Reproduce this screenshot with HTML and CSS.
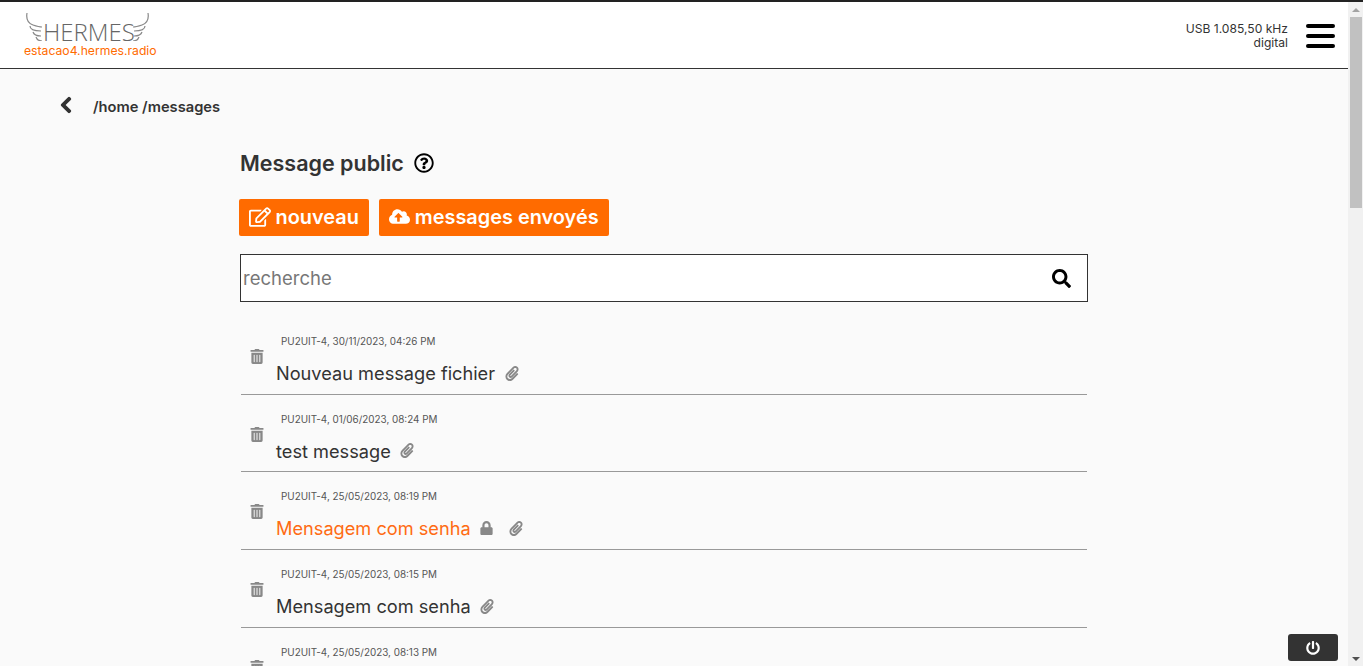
FILE: index.html
```html
<!DOCTYPE html>
<html lang="fr">
<head>
    <meta charset="UTF-8">
    <meta name="viewport" content="width=device-width, initial-scale=1.0">
    <title>Hermes - Messages</title>
    <link rel="stylesheet" href="styles.css">
</head>
<body>
    <svg class="icon-defs" aria-hidden="true">
        <symbol id="i-back" viewBox="0 0 320 512"><path d="M34.52 239.03L228.87 44.69c9.37-9.37 24.57-9.37 33.94 0l22.67 22.67c9.36 9.36 9.37 24.52.04 33.9L131.49 256l154.02 154.75c9.34 9.38 9.32 24.54-.04 33.9l-22.67 22.67c-9.37 9.37-24.57 9.37-33.94 0L34.52 272.97c-9.37-9.37-9.37-24.57 0-33.94z"/></symbol>
        <symbol id="i-search" viewBox="0 0 512 512"><path d="M505 442.7L405.3 343c-4.5-4.5-10.6-7-17-7H372c27.6-35.3 44-79.7 44-128C416 93.1 322.9 0 208 0S0 93.1 0 208s93.1 208 208 208c48.3 0 92.7-16.4 128-44v16.3c0 6.4 2.5 12.5 7 17l99.7 99.7c9.4 9.4 24.6 9.4 33.9 0l28.3-28.3c9.4-9.4 9.4-24.6.1-34zM208 336c-70.7 0-128-57.2-128-128 0-70.7 57.2-128 128-128 70.7 0 128 57.2 128 128 0 70.7-57.2 128-128 128z"/></symbol>
        <symbol id="i-lock" viewBox="0 0 448 512"><path d="M400 224h-24v-72C376 68.2 307.8 0 224 0S72 68.2 72 152v72H48c-26.5 0-48 21.5-48 48v192c0 26.5 21.5 48 48 48h352c26.5 0 48-21.5 48-48V272c0-26.5-21.5-48-48-48zm-104 0H152v-72c0-39.7 32.3-72 72-72s72 32.3 72 72v72z"/></symbol>
        <symbol id="i-trash" viewBox="0 0 448 512"><path d="M32 464a48 48 0 0 0 48 48h288a48 48 0 0 0 48-48V128H32zm272-256a16 16 0 0 1 32 0v224a16 16 0 0 1-32 0zm-96 0a16 16 0 0 1 32 0v224a16 16 0 0 1-32 0zm-96 0a16 16 0 0 1 32 0v224a16 16 0 0 1-32 0zM432 32H312l-9.4-18.7A24 24 0 0 0 281.1 0H166.8a23.72 23.72 0 0 0-21.4 13.3L136 32H16A16 16 0 0 0 0 48v32a16 16 0 0 0 16 16h416a16 16 0 0 0 16-16V48a16 16 0 0 0-16-16z"/></symbol>
        <symbol id="i-clip" viewBox="0 0 448 512"><path d="M43.246 466.142c-58.43-60.289-57.341-157.511 1.386-217.581L254.392 34c44.316-45.332 116.351-45.336 160.671 0 43.89 44.894 43.943 117.329 0 162.276L232.214 383.128c-29.855 30.537-78.633 30.111-107.982-.998-28.275-29.97-27.368-77.473 1.452-106.953l143.743-146.835c6.182-6.314 16.312-6.422 22.626-.241l22.861 22.379c6.315 6.182 6.422 16.312.241 22.626L171.427 319.927c-4.932 5.045-5.236 13.428-.648 18.292 4.372 4.634 11.245 4.711 15.688.165l182.849-186.851c19.613-20.062 19.613-52.725-.011-72.798-19.189-19.627-49.957-19.637-69.154 0L90.39 293.295c-34.763 35.56-35.299 93.12-1.191 128.313 34.01 35.093 88.985 35.137 123.058.286l172.06-175.999c6.177-6.319 16.307-6.433 22.626-.256l22.877 22.364c6.319 6.177 6.434 16.307.256 22.626l-172.06 175.998c-59.576 60.938-155.943 60.216-214.77-.485z"/></symbol>
        <symbol id="i-cloud" viewBox="0 0 640 512"><path d="M537.6 226.6c4.1-10.7 6.4-22.4 6.4-34.6 0-53-43-96-96-96-19.7 0-38.1 6-53.3 16.2C367 64.2 315.3 32 256 32c-88.4 0-160 71.6-160 160 0 2.7.1 5.4.2 8.1C40.2 219.8 0 273.2 0 336c0 79.5 64.5 144 144 144h368c70.7 0 128-57.3 128-128 0-61.9-44-113.6-102.4-125.4zM393.4 288H328v112c0 8.8-7.2 16-16 16h-48c-8.8 0-16-7.2-16-16V288h-65.4c-14.3 0-21.4-17.2-11.3-27.3l105.4-105.4c6.2-6.2 16.4-6.2 22.6 0l105.4 105.4c10.1 10.1 2.9 27.3-11.3 27.3z"/></symbol>
        <symbol id="i-edit" viewBox="0 0 576 512"><path d="M402.3 344.9l32-32c5-5 13.7-1.5 13.7 5.7V464c0 26.5-21.5 48-48 48H48c-26.5 0-48-21.5-48-48V112c0-26.5 21.5-48 48-48h273.5c7.1 0 10.7 8.6 5.7 13.7l-32 32c-1.5 1.5-3.5 2.3-5.7 2.3H48v352h352V350.5c0-2.1.8-4.1 2.3-5.6zm156.6-201.8L296.3 405.7l-90.4 10c-26.2 2.9-48.5-19.2-45.6-45.6l10-90.4L432.9 17.1c22.9-22.9 59.9-22.9 82.7 0l43.2 43.2c22.9 22.9 22.9 60 .1 82.8zM460.1 174L402 115.9 216.2 301.8l-7.3 65.3 65.3-7.3L460.1 174zm64.8-79.7l-43.2-43.2c-4.1-4.1-10.8-4.1-14.8 0L436 82l58.1 58.1 30.9-30.9c4-4.2 4-10.8-.1-14.9z"/></symbol>
        <symbol id="i-help" viewBox="0 0 512 512"><path d="M256 8C119.043 8 8 119.083 8 256c0 136.997 111.043 248 248 248s248-111.003 248-248C504 119.083 392.957 8 256 8zm0 448c-110.532 0-200-89.431-200-200 0-110.495 89.472-200 200-200 110.491 0 200 89.471 200 200 0 110.53-89.431 200-200 200zm107.244-255.2c0 67.052-72.421 68.084-72.421 92.863V300c0 6.627-5.373 12-12 12h-45.647c-6.627 0-12-5.373-12-12v-8.659c0-35.745 27.1-50.034 47.579-61.516 17.561-9.845 28.324-16.541 28.324-29.579 0-17.246-21.999-28.693-39.784-28.693-23.189 0-33.894 10.977-48.942 29.969-4.057 5.12-11.46 6.071-16.666 2.124l-27.824-21.098c-5.107-3.872-6.251-11.066-2.644-16.363C184.846 131.491 214.94 112 261.794 112c49.071 0 101.45 38.304 101.45 88.8zM298 368c0 23.159-18.841 42-42 42s-42-18.841-42-42 18.841-42 42-42 42 18.841 42 42z"/></symbol>
        <symbol id="i-power" viewBox="0 0 512 512"><path d="M400 54.1c63 45 104 118.6 104 201.9 0 136.8-110.8 247.7-247.5 248C120 504.3 8.2 393 8 256.4 7.9 173.1 48.9 99.3 111.8 54.2c11.7-8.3 28-4.8 35 7.7L162.6 90c5.9 10.5 3.1 23.8-6.6 31-41.5 30.8-68 79.6-68 134.9-.1 92.3 74.5 168.1 168 168.1 91.6 0 168.6-74.2 168-169.1-.3-51.8-24.7-101.8-68.1-134-9.7-7.2-12.4-20.5-6.5-30.9l15.8-28.1c7-12.4 23.2-16.1 34.8-7.8zM296 264V24c0-13.3-10.7-24-24-24h-32c-13.3 0-24 10.7-24 24v240c0 13.3 10.7 24 24 24h32c13.3 0 24-10.7 24-24z"/></symbol>
        <symbol id="i-wing" viewBox="0 0 18 30">
            <path d="M2 2 C1 8 2 12 8 14 C11 15 14 16 17 16"/>
            <path d="M5 15 C5 19 9 20 16 20"/>
            <path d="M8 21 C9 24 11 25 16 25"/>
            <path d="M11 26 C12 29 14 30 17 30"/>
        </symbol>
    </svg>

    <div class="page">
        <header class="topbar">
            <div class="brand">
                <div class="logo">
                    <svg class="wing"><use href="#i-wing"/></svg>
                    <span class="logo-text">HERMES</span>
                    <svg class="wing wing-right"><use href="#i-wing"/></svg>
                </div>
                <span class="station">estacao4.hermes.radio</span>
            </div>
            <div class="radio-status">
                <div class="radio-info">USB 1.085,50 kHz<br>digital</div>
                <div class="burger"><span></span><span></span><span></span></div>
            </div>
        </header>

        <nav class="crumbs">
            <svg class="back"><use href="#i-back"/></svg>
            <span>/home /messages</span>
        </nav>

        <main class="content">
            <h1 class="title">Message public <svg class="help"><use href="#i-help"/></svg></h1>

            <div class="actions">
                <button class="btn"><svg class="btn-edit"><use href="#i-edit"/></svg>nouveau</button>
                <button class="btn"><svg class="btn-cloud"><use href="#i-cloud"/></svg>messages envoyés</button>
            </div>

            <form class="search">
                <input type="text" placeholder="recherche">
                <svg class="search-icon"><use href="#i-search"/></svg>
            </form>

            <ul class="messages">
                <li class="msg">
                    <svg class="trash"><use href="#i-trash"/></svg>
                    <div class="msg-body">
                        <div class="msg-meta">PU2UIT-4, 30/11/2023, 04:26 PM</div>
                        <div class="msg-title">Nouveau message fichier <svg class="clip"><use href="#i-clip"/></svg></div>
                    </div>
                </li>
                <li class="msg">
                    <svg class="trash"><use href="#i-trash"/></svg>
                    <div class="msg-body">
                        <div class="msg-meta">PU2UIT-4, 01/06/2023, 08:24 PM</div>
                        <div class="msg-title">test message <svg class="clip"><use href="#i-clip"/></svg></div>
                    </div>
                </li>
                <li class="msg">
                    <svg class="trash"><use href="#i-trash"/></svg>
                    <div class="msg-body">
                        <div class="msg-meta">PU2UIT-4, 25/05/2023, 08:19 PM</div>
                        <div class="msg-title unread">Mensagem com senha <svg class="lock"><use href="#i-lock"/></svg> <svg class="clip clip-far"><use href="#i-clip"/></svg></div>
                    </div>
                </li>
                <li class="msg">
                    <svg class="trash"><use href="#i-trash"/></svg>
                    <div class="msg-body">
                        <div class="msg-meta">PU2UIT-4, 25/05/2023, 08:15 PM</div>
                        <div class="msg-title">Mensagem com senha <svg class="clip"><use href="#i-clip"/></svg></div>
                    </div>
                </li>
                <li class="msg">
                    <svg class="trash"><use href="#i-trash"/></svg>
                    <div class="msg-body">
                        <div class="msg-meta">PU2UIT-4, 25/05/2023, 08:13 PM</div>
                    </div>
                </li>
            </ul>
        </main>
    </div>

    <div class="scrollbar">
        <div class="arrow arrow-up"></div>
        <div class="track"><div class="thumb"></div></div>
        <div class="arrow arrow-down"></div>
    </div>

    <button class="power"><svg><use href="#i-power"/></svg></button>
</body>
</html>
```

FILE: styles.css
```css
html, body {
    height: 100%;
}

body {
    margin: 0;
    display: flex;
    overflow: hidden;
    border-top: 2px solid #222;
    box-sizing: border-box;
    font-family: Inter, Roboto, sans-serif;
    color: #333;
    background-color: #fafafa;
}

svg {
    fill: currentColor;
}

.icon-defs {
    display: none;
}

.page {
    flex: 1;
    min-width: 0;
    overflow: hidden;
}

.scrollbar {
    width: 15px;
    background-color: #f1f1f1;
    display: flex;
    flex-direction: column;
}

.arrow {
    height: 15px;
    display: flex;
    justify-content: center;
    align-items: center;
}

.arrow::before {
    content: "";
    border-left: 4px solid transparent;
    border-right: 4px solid transparent;
}

.arrow-up::before {
    border-bottom: 4px solid #a3a3a3;
}

.arrow-down::before {
    border-top: 4px solid #505050;
}

.track {
    flex: 1;
}

.thumb {
    height: 191px;
    margin-left: 2px;
    margin-right: 1px;
    background-color: #c1c1c1;
}

.topbar {
    height: 66px;
    background-color: #fff;
    border-bottom: 1px solid #333;
    display: flex;
    justify-content: space-between;
    align-items: flex-start;
}

.brand {
    margin-left: 24px;
    display: flex;
    flex-direction: column;
}

.logo {
    margin: 9px 0 0 1px;
    height: 30px;
    display: flex;
    align-items: flex-start;
}

.wing {
    flex: none;
    width: 18px;
    height: 30px;
    fill: none;
    stroke: #888;
    stroke-width: 1.2;
}

.wing-right {
    margin-left: -3px;
    transform: scaleX(-1);
}

.logo-text {
    margin-top: 12px;
    font-family: "Open Sans", sans-serif;
    font-weight: 300;
    font-size: 24px;
    line-height: 18px;
    color: #666;
}

.station {
    font-size: 12.2px;
    line-height: 14px;
    margin-top: 3px;
    color: #ff6b00;
}

.radio-status {
    display: flex;
    align-items: center;
    margin-right: 13px;
    margin-top: 20px;
}

.radio-info {
    font-size: 12.1px;
    line-height: 14px;
    text-align: right;
}

.burger {
    margin-left: 18px;
    width: 29px;
    display: flex;
    flex-direction: column;
    gap: 6px;
}

.burger span {
    height: 4px;
    border-radius: 2px;
    background-color: #000;
}

.crumbs {
    display: flex;
    align-items: center;
    padding: 27px 0 0 60px;
    height: 22px;
    font-size: 14.7px;
    font-weight: 600;
}

.back {
    width: 12px;
    height: 18px;
    margin-right: 21px;
    margin-bottom: 4px;
    stroke: currentColor;
    stroke-width: 30;
}

.content {
    width: 848px;
    margin-left: 240px;
}

.title {
    margin: 31px 0 0;
    font-size: 21.5px;
    line-height: 28px;
    font-weight: 600;
    display: flex;
    align-items: center;
}

.help {
    width: 20px;
    height: 20px;
    margin-left: 10px;
    color: #000;
}

.actions {
    display: flex;
    gap: 10px;
    margin: 22px 0 0 -1px;
}

.btn {
    height: 37px;
    padding: 0 10px 2px;
    border: none;
    border-radius: 2px;
    background-color: #ff6b00;
    color: #fff;
    font-family: inherit;
    font-size: 19.9px;
    font-weight: 600;
    display: flex;
    align-items: center;
}

.btn-edit {
    width: 22px;
    height: 20px;
    margin-right: 4.5px;
}

.btn-cloud {
    width: 21px;
    height: 17px;
    margin-right: 5px;
}

.search {
    margin-top: 18px;
    height: 46px;
    border: 1px solid #333;
    background-color: #fff;
    display: flex;
    align-items: center;
}

.search input {
    flex: 1;
    border: none;
    outline: none;
    padding: 0 2px;
    font-family: inherit;
    font-size: 18.5px;
    color: #333;
}

.search input::placeholder {
    color: #777;
}

.search-icon {
    width: 19px;
    height: 19px;
    margin-right: 16px;
    color: #000;
}

.messages {
    list-style: none;
    margin: 15px 1px 0;
    padding: 0;
}

.msg {
    height: 76.7px;
    border-bottom: 1px solid #999;
    display: flex;
}

.trash {
    width: 14px;
    height: 15px;
    margin: 32px 0 0 9px;
    color: #888;
}

.msg-body {
    margin-left: 12px;
}

.msg-meta {
    margin: 18px 0 0 5px;
    font-size: 9.9px;
    line-height: 13px;
    color: #555;
}

.msg-title {
    margin-top: 13px;
    font-size: 18.2px;
    line-height: 24px;
    display: flex;
    align-items: center;
}

.msg-title.unread {
    color: #ff6b13;
}

.clip {
    width: 14px;
    height: 15px;
    margin-left: 9.5px;
    color: #888;
}

.clip-far {
    margin-left: 16px;
}

.lock {
    width: 13px;
    height: 14px;
    margin-left: 9px;
    color: #888;
}

.power {
    position: absolute;
    right: 25px;
    bottom: 5px;
    width: 50px;
    height: 27px;
    border: none;
    border-radius: 3px;
    background-color: #333;
    color: #fff;
    display: flex;
    align-items: center;
    justify-content: center;
}

.power svg {
    width: 14px;
    height: 14px;
}
```
